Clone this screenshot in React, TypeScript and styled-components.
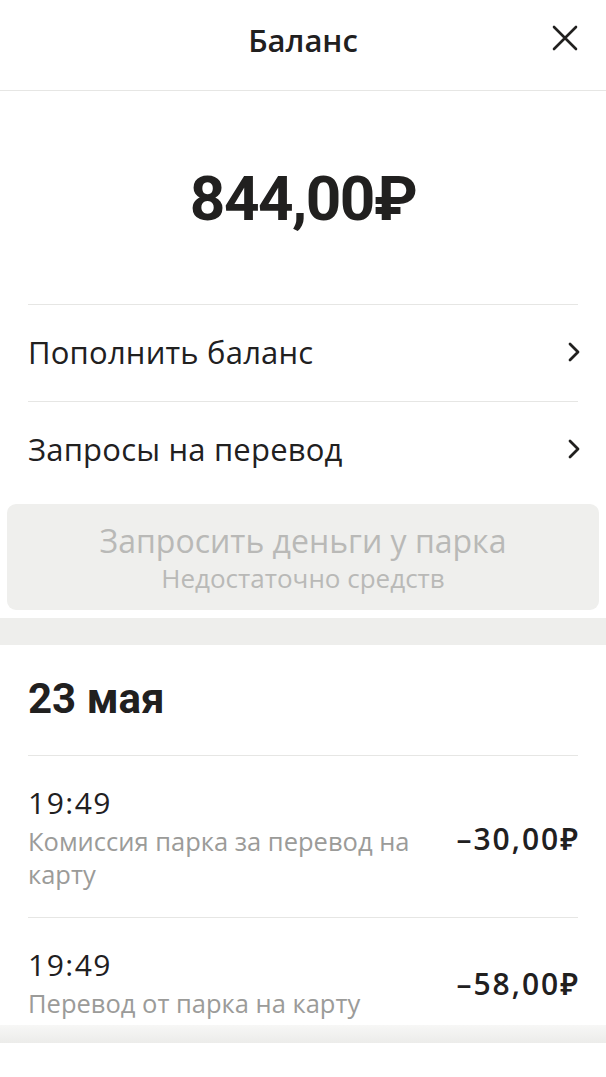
import React from "react";
import styled, { createGlobalStyle } from "styled-components";

const Global = createGlobalStyle`
  html, body { margin: 0; padding: 0; background: #ffffff; }
  body { font-family: "Open Sans", "Noto Sans", Arial, sans-serif; color: #21201f; -webkit-font-smoothing: antialiased; }
  * { box-sizing: border-box; }
`;

const Page = styled.div`
  width: 606px;
  min-height: 1077px;
  display: flex;
  flex-direction: column;
  background: #fff;
`;

const Header = styled.header`
  position: relative;
  height: 91px;
  border-bottom: 1px solid #e6e6e4;
  display: flex;
  align-items: center;
  justify-content: center;
  padding-bottom: 11px;
`;

const Title = styled.h1`
  margin: 0;
  font-size: 31px;
  font-weight: 600;
  line-height: 38px;
`;

const CloseButton = styled.button`
  position: absolute;
  right: 26px;
  top: 23px;
  width: 30px;
  height: 30px;
  padding: 0;
  border: 0;
  background: none;
  display: flex;
  align-items: center;
  justify-content: center;
`;

const BalanceBlock = styled.div`
  height: 213px;
  display: flex;
  align-items: center;
  justify-content: center;
  padding-top: 2px;
`;

const BalanceValue = styled.div`
  font-family: Roboto, Arial, sans-serif;
  font-size: 62px;
  font-weight: 700;
  letter-spacing: -1.5px;
  line-height: 70px;
`;

const Section = styled.div`
  padding: 0 28px;
`;

const MenuRow = styled.div`
  height: 97px;
  border-top: 1px solid #e6e6e4;
  display: flex;
  align-items: center;
  justify-content: space-between;
  font-size: 31px;
  letter-spacing: 0.2px;
  line-height: 38px;
  padding-bottom: 2px;
`;

const ChevronWrap = styled.span`
  display: flex;
  margin-right: -3px;
`;

const RequestButton = styled.div`
  margin: 6px 7px 0;
  height: 106px;
  border-radius: 9px;
  background: #efefed;
  display: flex;
  flex-direction: column;
  align-items: center;
  justify-content: center;
  padding-top: 2px;
`;

const RequestTitle = styled.div`
  font-size: 32px;
  line-height: 40px;
  color: #b9b9b7;
`;

const RequestSub = styled.div`
  font-size: 26px;
  line-height: 34px;
  color: #b9b9b7;
`;

const Band = styled.div`
  margin-top: 8px;
  height: 27px;
  background: #eeeeec;
`;

const DateHeader = styled.div`
  height: 110px;
  display: flex;
  align-items: center;
  font-family: Roboto, Arial, sans-serif;
  font-size: 42px;
  font-weight: 700;
  line-height: 50px;
  padding-bottom: 2px;
`;

const TxRow = styled.div<{ $last?: boolean }>`
  border-top: 1px solid #e6e6e4;
  display: flex;
  align-items: center;
  justify-content: space-between;
  gap: 30px;
  padding: 30px 0 ${(p) => (p.$last ? "5px" : "26px")};
`;

const TxInfo = styled.div`
  flex: 1;
  max-width: 400px;
`;

const TxTime = styled.div`
  font-size: 30px;
  letter-spacing: 1.5px;
  line-height: 34px;
  margin-bottom: 5px;
`;

const TxDesc = styled.div`
  font-size: 25.5px;
  line-height: 33px;
  color: #9b9b99;
`;

const TxAmount = styled.div`
  font-size: 30px;
  font-weight: 600;
  letter-spacing: 2px;
  line-height: 36px;
  white-space: nowrap;
  margin-right: -2px;
`;

const BottomShade = styled.div`
  height: 18px;
  background: linear-gradient(#f7f7f6, #ececea);
`;

const Chevron = () => (
  <svg width="14" height="22" viewBox="0 0 14 22" fill="none">
    <path d="M3 3l8 8-8 8" stroke="#21201f" strokeWidth="2.8" strokeLinecap="round" strokeLinejoin="round" />
  </svg>
);

const CloseIcon = () => (
  <svg width="26" height="26" viewBox="0 0 26 26" fill="none">
    <path d="M2 2l22 22M24 2L2 24" stroke="#21201f" strokeWidth="2.6" strokeLinecap="round" />
  </svg>
);

const menu = ["Пополнить баланс", "Запросы на перевод"];

const txs = [
  { time: "19:49", desc: "Комиссия парка за перевод на карту", amount: "–30,00₽" },
  { time: "19:49", desc: "Перевод от парка на карту", amount: "–58,00₽" },
];

export default function App() {
  return (
    <Page>
      <Global />
      <Header>
        <Title>Баланс</Title>
        <CloseButton aria-label="Закрыть">
          <CloseIcon />
        </CloseButton>
      </Header>
      <BalanceBlock>
        <BalanceValue>844,00₽</BalanceValue>
      </BalanceBlock>
      <Section>
        {menu.map((m) => (
          <MenuRow key={m}>
            <span>{m}</span>
            <ChevronWrap>
              <Chevron />
            </ChevronWrap>
          </MenuRow>
        ))}
      </Section>
      <RequestButton>
        <RequestTitle>Запросить деньги у парка</RequestTitle>
        <RequestSub>Недостаточно средств</RequestSub>
      </RequestButton>
      <Band />
      <Section>
        <DateHeader>23 мая</DateHeader>
        {txs.map((t, i) => (
          <TxRow key={i} $last={i === txs.length - 1}>
            <TxInfo>
              <TxTime>{t.time}</TxTime>
              <TxDesc>{t.desc}</TxDesc>
            </TxInfo>
            <TxAmount>{t.amount}</TxAmount>
          </TxRow>
        ))}
      </Section>
      <BottomShade />
    </Page>
  );
}
